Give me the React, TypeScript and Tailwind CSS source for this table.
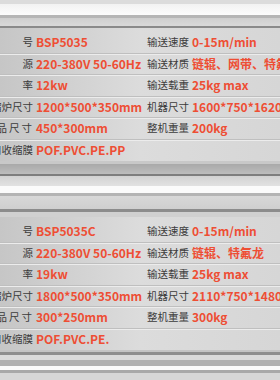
const font = { fontFamily: '"Noto Sans CJK SC", "Noto Sans", sans-serif' };

type Row = { l: string; lv: string; r?: string; rv?: string; wide?: boolean };

const machines: Row[][] = [
  [
    { l: '型　　　号', lv: 'BSP5035', r: '输送速度', rv: '0-15m/min' },
    { l: '电　　　源', lv: '220-380V 50-60Hz', r: '输送材质', rv: '链辊、网带、特氟龙' },
    { l: '功　　　率', lv: '12kw', r: '输送载重', rv: '25kg max' },
    { l: '收缩炉尺寸', lv: '1200*500*350mm', r: '机器尺寸', rv: '1600*750*1620mm' },
    { l: '产品尺寸', lv: '450*300mm', r: '整机重量', rv: '200kg', wide: true },
    { l: '适用收缩膜', lv: 'POF.PVC.PE.PP' },
  ],
  [
    { l: '型　　　号', lv: 'BSP5035C', r: '输送速度', rv: '0-15m/min' },
    { l: '电　　　源', lv: '220-380V 50-60Hz', r: '输送材质', rv: '链辊、特氟龙' },
    { l: '功　　　率', lv: '19kw', r: '输送载重', rv: '25kg max' },
    { l: '收缩炉尺寸', lv: '1800*500*350mm', r: '机器尺寸', rv: '2110*750*1480mm' },
    { l: '产品尺寸', lv: '300*250mm', r: '整机重量', rv: '300kg', wide: true },
    { l: '适用收缩膜', lv: 'POF.PVC.PE.' },
  ],
];

function Panel({ rows }: { rows: Row[] }) {
  return (
    <div className="flex flex-col pt-[4px] bg-gradient-to-r from-[#c6c6c6] via-[#dcdcdc] to-[#d6d6d6]">
      {rows.map((row, i) => (
        <div
          key={i}
          className={`flex items-center h-[21.5px] ${i < rows.length - 1 ? 'border-b border-[#bfbfbf] shadow-[0_1px_0_#ececec]' : ''}`}
        >
          <div className="flex items-center w-[147px] shrink-0">
            <div className="flex justify-end w-[33px] overflow-hidden whitespace-nowrap text-[10.5px] text-[#3c3c3c]">
              <span className={row.wide ? 'tracking-[2px] mr-[-1px]' : ''}>{row.l}</span>
            </div>
            <div className="ml-[3px] whitespace-nowrap text-[12px] font-bold text-[#ee4e34]">{row.lv}</div>
          </div>
          {row.r && (
            <div className="flex items-center whitespace-nowrap">
              <div className="w-[44px] text-[10.5px] text-[#3c3c3c]">{row.r}</div>
              <div className="ml-[1px] text-[12px] font-bold text-[#ee4e34]">{row.rv}</div>
            </div>
          )}
        </div>
      ))}
    </div>
  );
}

export default function App() {
  return (
    <div className="w-[280px] h-[380px] overflow-hidden flex flex-col bg-[#d4d4d4]" style={font}>
      {/* top rail */}
      <div className="h-[4px] bg-[#dcdcdc]" />
      <div className="h-[11px] bg-gradient-to-b from-[#f2f2f2] to-[#fdfdfd]" />
      <div className="h-[3px] bg-[#b6b6b6]" />
      <div className="h-[8px] bg-gradient-to-b from-[#cfcfcf] to-[#d9d9d9]" />
      <div className="h-[2px] bg-[#8a8a8a]" />

      <Panel rows={machines[0]} />

      {/* middle rail */}
      <div className="h-[3px] bg-[#c8c8c8]" />
      <div className="h-[10px] bg-gradient-to-b from-[#a9a9a9] to-[#bdbdbd]" />
      <div className="h-[2px] bg-[#7e7e7e]" />
      <div className="h-[10px] bg-gradient-to-b from-[#d2d2d2] to-[#e2e2e2]" />
      <div className="h-[7px] bg-[#fbfbfb]" />
      <div className="h-[3px] bg-[#b4b4b4]" />
      <div className="h-[13px] bg-gradient-to-b from-[#d8d8d8] to-[#cfcfcf]" />
      <div className="h-[3px] bg-[#8c8c8c]" />
      <div className="h-[5px] bg-[#d0d0d0]" />

      <Panel rows={machines[1]} />

      {/* bottom rail */}
      <div className="h-[2px] bg-[#c4c4c4]" />
      <div className="h-[3px] bg-[#8e8e8e]" />
      <div className="h-[5px] bg-[#dadada]" />
      <div className="h-[6px] bg-[#b0b0b0]" />
      <div className="h-[4px] bg-[#fafafa]" />
      <div className="h-[3px] bg-[#a8a8a8]" />
      <div className="flex-1 bg-[#d6d6d6]" />
    </div>
  );
}
